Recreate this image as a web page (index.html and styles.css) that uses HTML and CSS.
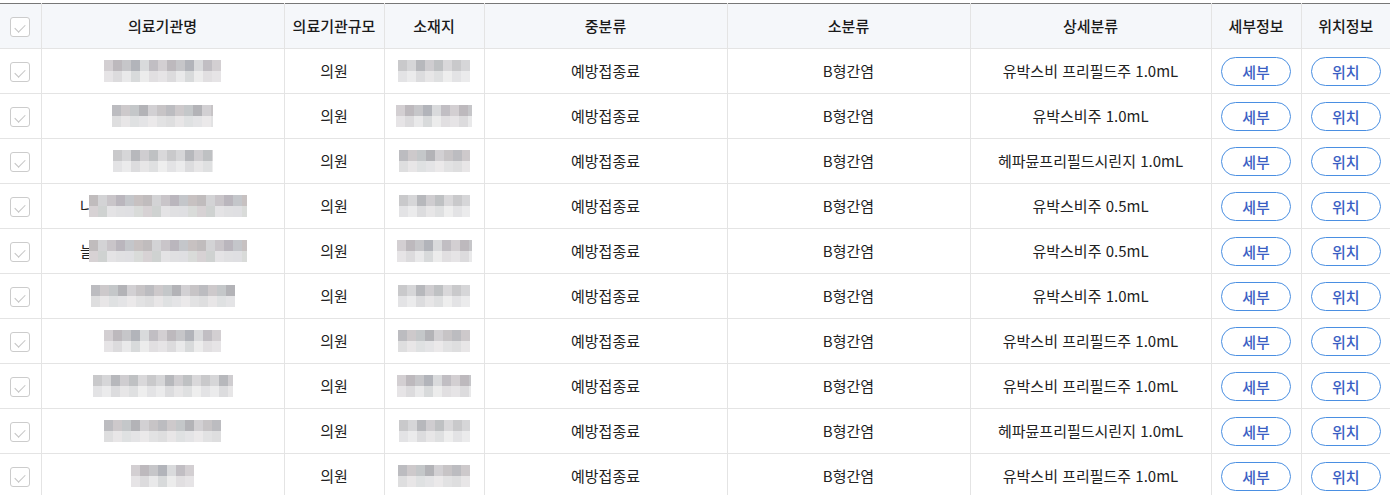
FILE: index.html
```html
<!DOCTYPE html>
<html lang="ko">
<head>
  <meta charset="UTF-8">
  <title>의료기관 목록</title>
  <link rel="stylesheet" href="styles.css">
</head>
<body>
  <table class="grid">
    <colgroup>
      <col class="c-check">
      <col class="c-name">
      <col class="c-size">
      <col class="c-loc">
      <col class="c-mid">
      <col class="c-small">
      <col class="c-detail">
      <col class="c-btn1">
      <col class="c-btn2">
    </colgroup>
    <thead>
      <tr>
        <th><span class="chk"></span></th>
        <th>의료기관명</th>
        <th>의료기관규모</th>
        <th>소재지</th>
        <th>중분류</th>
        <th>소분류</th>
        <th>상세분류</th>
        <th>세부정보</th>
        <th>위치정보</th>
      </tr>
    </thead>
    <tbody>
      <tr>
        <td><span class="chk"></span></td>
        <td><span class="mosaic m-a" style="width:117px"></span></td>
        <td>의원</td>
        <td><span class="mosaic m-b" style="width:72px"></span></td>
        <td>예방접종료</td>
        <td>B형간염</td>
        <td>유박스비 프리필드주 1.0mL</td>
        <td><button class="pill">세부</button></td>
        <td><button class="pill">위치</button></td>
      </tr>
      <tr>
        <td><span class="chk"></span></td>
        <td><span class="mosaic m-c" style="width:101px"></span></td>
        <td>의원</td>
        <td><span class="mosaic m-a" style="width:76px"></span></td>
        <td>예방접종료</td>
        <td>B형간염</td>
        <td>유박스비주 1.0mL</td>
        <td><button class="pill">세부</button></td>
        <td><button class="pill">위치</button></td>
      </tr>
      <tr>
        <td><span class="chk"></span></td>
        <td><span class="mosaic m-b" style="width:100px"></span></td>
        <td>의원</td>
        <td><span class="mosaic m-c" style="width:71px"></span></td>
        <td>예방접종료</td>
        <td>B형간염</td>
        <td>헤파뮨프리필드시린지 1.0mL</td>
        <td><button class="pill">세부</button></td>
        <td><button class="pill">위치</button></td>
      </tr>
      <tr>
        <td><span class="chk"></span></td>
        <td class="name-pre"><span class="lead">나</span><span class="mosaic m-d" style="width:158px"></span></td>
        <td>의원</td>
        <td><span class="mosaic m-b" style="width:71px"></span></td>
        <td>예방접종료</td>
        <td>B형간염</td>
        <td>유박스비주 0.5mL</td>
        <td><button class="pill">세부</button></td>
        <td><button class="pill">위치</button></td>
      </tr>
      <tr>
        <td><span class="chk"></span></td>
        <td class="name-pre"><span class="lead">늘</span><span class="mosaic m-d" style="width:158px"></span></td>
        <td>의원</td>
        <td><span class="mosaic m-a" style="width:75px"></span></td>
        <td>예방접종료</td>
        <td>B형간염</td>
        <td>유박스비주 0.5mL</td>
        <td><button class="pill">세부</button></td>
        <td><button class="pill">위치</button></td>
      </tr>
      <tr>
        <td><span class="chk"></span></td>
        <td><span class="mosaic m-c" style="width:144px"></span></td>
        <td>의원</td>
        <td><span class="mosaic m-b" style="width:72px"></span></td>
        <td>예방접종료</td>
        <td>B형간염</td>
        <td>유박스비주 1.0mL</td>
        <td><button class="pill">세부</button></td>
        <td><button class="pill">위치</button></td>
      </tr>
      <tr>
        <td><span class="chk"></span></td>
        <td><span class="mosaic m-a" style="width:117px"></span></td>
        <td>의원</td>
        <td><span class="mosaic m-c" style="width:72px"></span></td>
        <td>예방접종료</td>
        <td>B형간염</td>
        <td>유박스비 프리필드주 1.0mL</td>
        <td><button class="pill">세부</button></td>
        <td><button class="pill">위치</button></td>
      </tr>
      <tr>
        <td><span class="chk"></span></td>
        <td><span class="mosaic m-b" style="width:140px"></span></td>
        <td>의원</td>
        <td><span class="mosaic m-a" style="width:74px"></span></td>
        <td>예방접종료</td>
        <td>B형간염</td>
        <td>유박스비 프리필드주 1.0mL</td>
        <td><button class="pill">세부</button></td>
        <td><button class="pill">위치</button></td>
      </tr>
      <tr>
        <td><span class="chk"></span></td>
        <td><span class="mosaic m-c" style="width:117px"></span></td>
        <td>의원</td>
        <td><span class="mosaic m-b" style="width:71px"></span></td>
        <td>예방접종료</td>
        <td>B형간염</td>
        <td>헤파뮨프리필드시린지 1.0mL</td>
        <td><button class="pill">세부</button></td>
        <td><button class="pill">위치</button></td>
      </tr>
      <tr>
        <td><span class="chk"></span></td>
        <td><span class="mosaic m-a" style="width:63px"></span></td>
        <td>의원</td>
        <td><span class="mosaic m-c" style="width:72px"></span></td>
        <td>예방접종료</td>
        <td>B형간염</td>
        <td>유박스비 프리필드주 1.0mL</td>
        <td><button class="pill">세부</button></td>
        <td><button class="pill">위치</button></td>
      </tr>
    </tbody>
  </table>
</body>
</html>
```

FILE: styles.css
```css
* {
  margin: 0;
  padding: 0;
  box-sizing: border-box;
  font-family: 'Noto Sans CJK KR', 'Noto Sans', sans-serif;
}

:root {
  --line: #e4e4e4;
  --head-bg: #f5f7fa;
  --text: #222;
  --blue: #4a8fe2;
  --blue-text: #3b5fc4;
}

body {
  background: #fff;
  color: var(--text);
  padding-top: 3px;
  overflow: hidden;
}

.grid {
  width: 1390px;
  border-collapse: collapse;
  table-layout: fixed;
  border-top: 1px solid #777;
  font-size: 15px;
}

.c-check { width: 41px; }
.c-name { width: 243px; }
.c-size { width: 100px; }
.c-loc { width: 100px; }
.c-mid { width: 243px; }
.c-small { width: 243px; }
.c-detail { width: 241px; }
.c-btn1 { width: 90px; }
.c-btn2 { width: 89px; }

.grid th,
.grid td {
  height: 45px;
  text-align: center;
  vertical-align: middle;
  border-bottom: 1px solid var(--line);
  border-left: 1px solid var(--line);
  white-space: nowrap;
  line-height: 20px;
}

.grid th:first-child,
.grid td:first-child {
  border-left: none;
}

.grid th {
  background: var(--head-bg);
  font-weight: 500;
  color: #1a1a1a;
}

.grid td {
  font-weight: 400;
  color: var(--text);
}

.chk {
  display: inline-block;
  width: 20px;
  height: 20px;
  border: 1px solid #ccc;
  border-radius: 3px;
  background: #fff;
  position: relative;
  vertical-align: middle;
  margin-left: -1px;
}

.chk::after {
  content: "";
  position: absolute;
  left: 6px;
  top: 4px;
  width: 5px;
  height: 9px;
  border-right: 1px solid #c4c4c4;
  border-bottom: 1px solid #c4c4c4;
  transform: rotate(45deg);
}

.pill {
  display: inline-block;
  width: 70px;
  height: 29px;
  border: 1px solid var(--blue);
  border-radius: 15px;
  background: #fff;
  color: var(--blue-text);
  font-size: 15px;
  font-weight: 500;
  vertical-align: middle;
  cursor: pointer;
}

/* pixelated placeholder for masked names and addresses */
.mosaic {
  display: inline-block;
  height: 22px;
  vertical-align: middle;
  background-repeat: repeat-x;
  background-size: 54px 11px, 54px 11px;
  background-position: 0 0, 0 11px;
}

.m-a {
  background-image:
    linear-gradient(90deg, #d3cfd2 0 9px, #bdb9bd 9px 18px, #c6c6c9 18px 27px, #b2b4ba 27px 36px, #d9dadc 36px 45px, #c1bec3 45px 54px),
    linear-gradient(90deg, #e6e4e6 0 9px, #dcdbdd 9px 18px, #e9e9ea 18px 27px, #d8dadb 27px 36px, #ececec 36px 45px, #e1dfe1 45px 54px);
}

.m-b {
  background-image:
    linear-gradient(90deg, #c9c9cb 0 9px, #d6d6d8 9px 18px, #b7b8bc 18px 27px, #cfcdd0 27px 36px, #bfc1c3 36px 45px, #d9d8da 45px 54px),
    linear-gradient(90deg, #e3e3e5 0 9px, #ebebec 9px 18px, #dcdcde 18px 27px, #e7e6e7 27px 36px, #dfe0e1 36px 45px, #eeeeee 45px 54px);
}

.m-c {
  background-image:
    linear-gradient(90deg, #bcbcc0 0 9px, #cdc9cb 9px 18px, #c4c7c9 18px 27px, #b3b3b7 27px 36px, #d2d0d3 36px 45px, #c7c4c6 45px 54px),
    linear-gradient(90deg, #dededf 0 9px, #e8e6e7 9px 18px, #dfe1e2 18px 27px, #e4e4e6 27px 36px, #ebe9ea 36px 45px, #e2e2e3 45px 54px);
}

.m-d {
  background-image:
    linear-gradient(90deg, #c0bcbd 0 9px, #d3d3d5 9px 18px, #c9c5c9 18px 27px, #bab6bd 27px 36px, #c4c6ca 36px 45px, #c7c1c1 45px 54px),
    linear-gradient(90deg, #d7d2d4 0 9px, #cfd2d1 9px 18px, #e4e3e5 18px 27px, #e0e0e2 27px 36px, #dfdfe2 36px 45px, #d9dbd9 45px 54px);
}

.name-pre {
  padding-left: 2px;
}

.lead {
  display: inline-block;
  vertical-align: middle;
}

.name-pre .mosaic {
  margin-left: -5px;
}
```
